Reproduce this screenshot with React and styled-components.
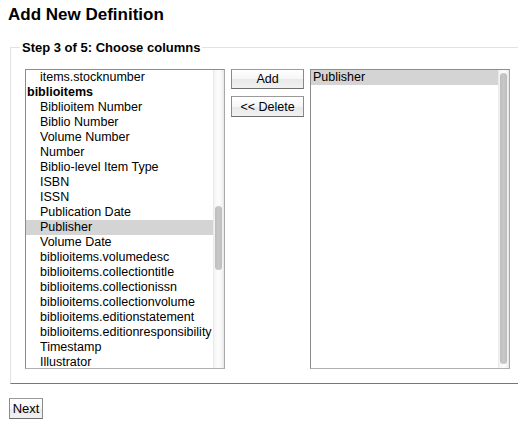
import React from 'react'
import styled, { createGlobalStyle } from "styled-components";

const available = [
  { label: "items.stocknumber" },
  { label: "biblioitems", group: true },
  { label: "Biblioitem Number" },
  { label: "Biblio Number" },
  { label: "Volume Number" },
  { label: "Number" },
  { label: "Biblio-level Item Type" },
  { label: "ISBN" },
  { label: "ISSN" },
  { label: "Publication Date" },
  { label: "Publisher", selected: true },
  { label: "Volume Date" },
  { label: "biblioitems.volumedesc" },
  { label: "biblioitems.collectiontitle" },
  { label: "biblioitems.collectionissn" },
  { label: "biblioitems.collectionvolume" },
  { label: "biblioitems.editionstatement" },
  { label: "biblioitems.editionresponsibility" },
  { label: "Timestamp" },
  { label: "Illustrator" },
];

const chosen = [{ label: "Publisher", selected: true, flat: true }];

function ListBox({ items, thumbTop, thumbHeight }) {
  return (
    <Box>
      <Options>
        {items.map((it) =>
          it.group ? (
            <GroupLabel key={it.label}>{it.label}</GroupLabel>
          ) : (
            <Option key={it.label} $selected={it.selected} $flat={it.flat}>
              {it.label}
            </Option>
          )
        )}
      </Options>
      <Track>
        <Thumb style={{ marginTop: thumbTop, height: thumbHeight }} />
      </Track>
    </Box>
  );
}

export default function App() {
  return (
    <Page>
      <GlobalStyle />
      <Title>Add New Definition</Title>
      <Fieldset>
        <Legend>Step 3 of 5: Choose columns</Legend>
        <Columns>
          <ListBox items={available} thumbTop={136} thumbHeight={64} />
          <ButtonStack>
            <Button>Add</Button>
            <Button $tall>&lt;&lt; Delete</Button>
          </ButtonStack>
          <ListBox items={chosen} thumbTop={3} thumbHeight={291} />
        </Columns>
      </Fieldset>
      <NextButton>Next</NextButton>
    </Page>
  );
}

// ........ global ...........

const GlobalStyle = createGlobalStyle`
html, body {
  margin: 0;
  padding: 0;
  background: #fff;
}
body {
  font-family: "Liberation Sans", Arial, Helvetica, sans-serif;
  color: #000;
}
`

const Page = styled.div`
padding: 0 0 0 8px;
width: 510px;
`

const Title = styled.h1`
margin: 5px 0 15px;
font-size: 17px;
line-height: 20px;
font-weight: bold;
`

// ........ fieldset ...........

const Fieldset = styled.fieldset`
margin: 0 0 0 2px;
width: 508px;
box-sizing: border-box;
border: 1px solid #e2e2e2;
border-bottom: 1px solid #777;
border-right: none;
padding: 14px 0 14px 14px;
min-width: 0;
`

const Legend = styled.legend`
font-size: 13px;
font-weight: bold;
line-height: 15px;
padding: 0 2px;
margin-left: -5px;
`

const Columns = styled.div`
display: flex;
align-items: flex-start;
gap: 6px;
`

// ........ list boxes ...........

const Box = styled.div`
display: flex;
width: 200px;
height: 300px;
box-sizing: border-box;
border: 1px solid #8c8c8c;
border-right-color: #a8a8a8;
border-bottom-color: #b0b0b0;
background: #fff;
overflow: hidden;
`

const Options = styled.div`
flex: 1;
min-width: 0;
`

const Option = styled.div`
height: 15px;
line-height: 15px;
font-size: 12.5px;
white-space: nowrap;
padding-left: ${(p) => (p.$flat ? "2px" : "14px")};
background: ${(p) => (p.$selected ? "#d4d4d4" : "transparent")};
`

const GroupLabel = styled.div`
height: 15px;
line-height: 15px;
font-size: 12.5px;
font-weight: bold;
padding-left: 1px;
white-space: nowrap;
`

const Track = styled.div`
width: 11px;
flex: none;
display: flex;
justify-content: center;
background: linear-gradient(to right, #e6e6e6 0, #f7f7f7 2px, #fdfdfd 6px, #f0f0f0 10px, #e2e2e2 11px);
`

const Thumb = styled.div`
width: 7px;
border-radius: 4px;
background: linear-gradient(to right, #bdbdbd, #c8c8c8 50%, #bdbdbd);
`

// ........ buttons ...........

const ButtonStack = styled.div`
display: flex;
flex-direction: column;
gap: 7px;
`

const Button = styled.button`
width: 73px;
height: ${(p) => (p.$tall ? "21px" : "20px")};
box-sizing: border-box;
margin: 0;
padding: 0;
font-family: "Liberation Sans", Arial, sans-serif;
font-size: 12.5px;
color: #000;
border: 1px solid #8a8a8a;
border-top-color: #9a9a9a;
border-bottom-color: #6e6e6e;
border-radius: 0;
background: linear-gradient(to bottom, #ffffff 0%, #f6f6f6 50%, #e9e9e9 51%, #f1f1f1 100%);
`

const NextButton = styled(Button)`
display: block;
width: 34px;
height: 21px;
margin: 14px 0 0 1px;
font-size: 13px;
`
